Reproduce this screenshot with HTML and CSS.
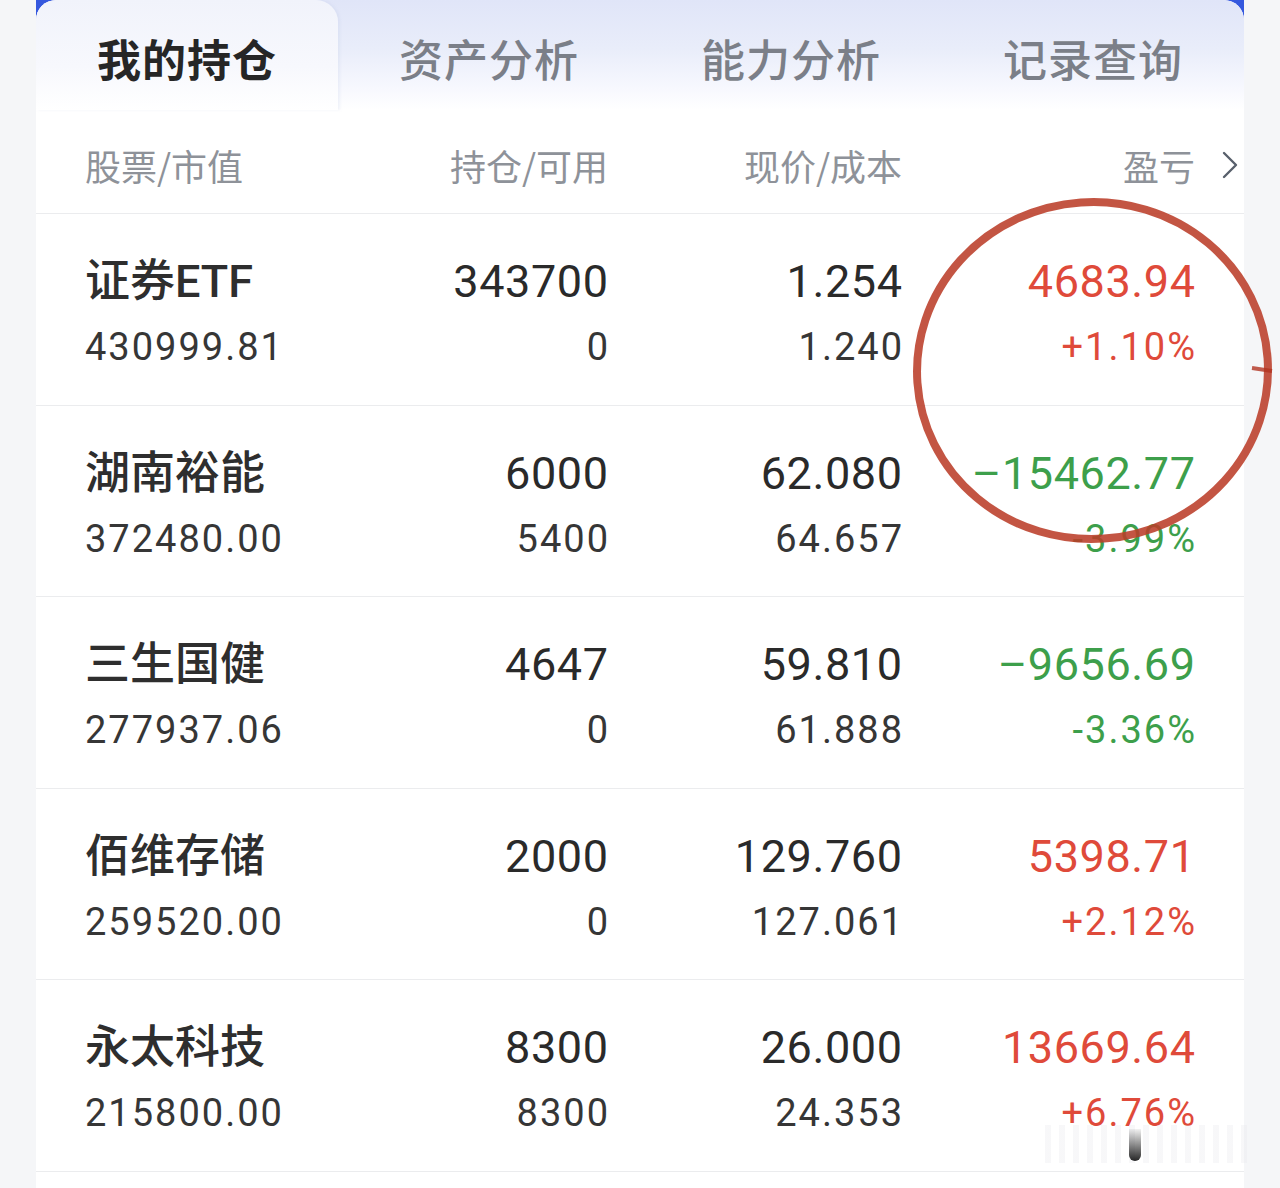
FILE: index.html
```html
<!DOCTYPE html>
<html lang="zh-CN">
<head>
<meta charset="utf-8">
<title>我的持仓</title>
<link rel="stylesheet" href="styles.css">
</head>
<body>
<div class="page">
  <div class="frame">
    <div class="card">
      <div class="tabs">
        <div class="tab active">我的持仓</div>
        <div class="tab">资产分析</div>
        <div class="tab">能力分析</div>
        <div class="tab">记录查询</div>
      </div>
      <div class="thead grid">
        <div class="th left">股票/市值</div>
        <div class="th">持仓/可用</div>
        <div class="th">现价/成本</div>
        <div class="th last">盈亏<svg class="chev" width="16" height="28" viewBox="0 0 16 28"><polyline points="2,2 14,14 2,26" fill="none" stroke="#58606c" stroke-width="2.4" stroke-linecap="round" stroke-linejoin="round"/></svg></div>
      </div>

      <div class="row grid">
        <div class="cell left"><div class="l1 name">证券ETF</div><div class="l2">430999.81</div></div>
        <div class="cell"><div class="l1">343700</div><div class="l2">0</div></div>
        <div class="cell"><div class="l1">1.254</div><div class="l2">1.240</div></div>
        <div class="cell up"><div class="l1">4683.94</div><div class="l2">+1.10%</div></div>
      </div>
      <div class="row grid">
        <div class="cell left"><div class="l1 name">湖南裕能</div><div class="l2">372480.00</div></div>
        <div class="cell"><div class="l1">6000</div><div class="l2">5400</div></div>
        <div class="cell"><div class="l1">62.080</div><div class="l2">64.657</div></div>
        <div class="cell down"><div class="l1">–15462.77</div><div class="l2">-3.99%</div></div>
      </div>
      <div class="row grid">
        <div class="cell left"><div class="l1 name">三生国健</div><div class="l2">277937.06</div></div>
        <div class="cell"><div class="l1">4647</div><div class="l2">0</div></div>
        <div class="cell"><div class="l1">59.810</div><div class="l2">61.888</div></div>
        <div class="cell down"><div class="l1">–9656.69</div><div class="l2">-3.36%</div></div>
      </div>
      <div class="row grid">
        <div class="cell left"><div class="l1 name">佰维存储</div><div class="l2">259520.00</div></div>
        <div class="cell"><div class="l1">2000</div><div class="l2">0</div></div>
        <div class="cell"><div class="l1">129.760</div><div class="l2">127.061</div></div>
        <div class="cell up"><div class="l1">5398.71</div><div class="l2">+2.12%</div></div>
      </div>
      <div class="row grid">
        <div class="cell left"><div class="l1 name">永太科技</div><div class="l2">215800.00</div></div>
        <div class="cell"><div class="l1">8300</div><div class="l2">8300</div></div>
        <div class="cell"><div class="l1">26.000</div><div class="l2">24.353</div></div>
        <div class="cell up"><div class="l1">13669.64</div><div class="l2">+6.76%</div></div>
      </div>
      <div class="tail"></div>
    </div>
  </div>

  <svg class="annot" width="380" height="370" viewBox="0 0 380 370">
    <ellipse cx="192.5" cy="180.5" rx="175.5" ry="168.5" fill="none" stroke="#bb3d29" stroke-opacity="0.88" stroke-width="8" transform="rotate(-4 192.5 180.5)"/>
    <path d="M352 178 L372 181" stroke="#b23320" stroke-width="4" stroke-opacity="0.8"/>
  </svg>
  <div class="wm"><span class="wm-blob"></span></div>
</div>
</body>
</html>
```

FILE: styles.css
```css
* { box-sizing: border-box; }
html, body { margin: 0; padding: 0; }
body {
  background: #f5f6f8;
  font-family: Roboto, "Noto Sans CJK SC", sans-serif;
  color: #333;
  overflow: hidden;
}
.page {
  position: relative;
  width: 1280px;
  height: 1188px;
  overflow: hidden;
}
.frame {
  margin: 0 36px;
  background: linear-gradient(180deg, #3558de 0, #3558de 26px, transparent 26px);
}
.card {
  background: #fff;
  border-radius: 20px 20px 0 0;
  overflow: hidden;
}
.tabs {
  display: grid;
  grid-template-columns: repeat(4, 1fr);
  height: 110px;
  background: linear-gradient(180deg, #e0e5f8 0%, #e9edfa 45%, #f7f8fe 80%, #ffffff 100%);
  border-radius: 20px 20px 0 0;
}
.tab {
  display: flex;
  align-items: center;
  justify-content: center;
  padding-top: 6px;
  font-family: "Noto Sans CJK SC", sans-serif;
  font-size: 44px;
  font-weight: 500;
  color: #7b7f88;
  letter-spacing: 1px;
}
.tab.active {
  color: #262626;
  font-weight: 700;
  background: linear-gradient(180deg, #f1f3fb 0%, #f7f8fd 60%, #ffffff 100%);
  border-radius: 20px 22px 0 0;
  box-shadow: 2px 0 3px rgba(180, 190, 220, 0.18);
}
.grid {
  display: grid;
  grid-template-columns: 229px 294px 294px 293px;
  padding: 0 49px;
}
.thead {
  height: 104px;
  align-items: center;
  padding-top: 6px;
  border-bottom: 1px solid #ebecee;
}
.th {
  text-align: right;
  font-family: "Noto Sans CJK SC", sans-serif;
  font-size: 36px;
  color: #8e9299;
  line-height: 48px;
}
.th.left { text-align: left; }
.th.last {
  display: flex;
  justify-content: flex-end;
  align-items: center;
}
.chev {
  margin-left: 27px;
  margin-right: -43px;
  flex: none;
}
.row {
  height: 191.6px;
  padding-top: 40px;
  border-bottom: 1px solid #ebecee;
}
.cell { text-align: right; white-space: nowrap; }
.cell.left { text-align: left; }
.l1 {
  font-size: 45px;
  line-height: 56px;
  font-weight: 400;
  color: #2a2a2a;
  letter-spacing: 0.6px;
  margin-right: -0.6px;
}
.cell.left .l1 { margin-right: 0; }
.l1.name {
  font-weight: 500;
  color: #2e2e2e;
  letter-spacing: 0;
}
.l2 {
  margin-top: 15px;
  font-size: 38px;
  line-height: 44px;
  font-weight: 400;
  color: #363636;
  letter-spacing: 2px;
  margin-right: -2px;
}
.cell.left .l2 { margin-right: 0; }
.up .l1, .up .l2 { color: #df4a3a; }
.down .l1, .down .l2 { color: #3d9f4b; }
.tail { height: 20px; }
.annot {
  position: absolute;
  left: 900px;
  top: 190px;
}
.wm {
  position: absolute;
  left: 1045px;
  top: 1125px;
  width: 205px;
  height: 38px;
  background: repeating-linear-gradient(90deg, rgba(230,230,235,0.3) 0 6px, rgba(255,255,255,0) 6px 14px);
}
.wm-blob {
  position: absolute;
  left: 84px;
  top: 4px;
  width: 12px;
  height: 32px;
  border-radius: 0 0 6px 6px;
  background: linear-gradient(180deg, rgba(0,0,0,0.05), rgba(0,0,0,0.85));
}
```
